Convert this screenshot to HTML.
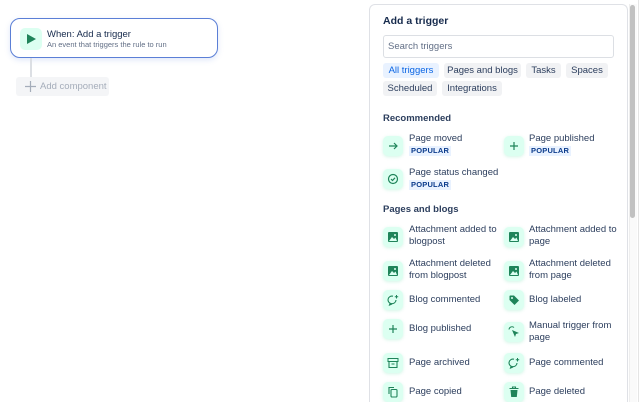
<!DOCTYPE html>
<html><head><meta charset="utf-8"><style>
*{box-sizing:border-box;margin:0;padding:0}
html,body{width:640px;height:402px;overflow:hidden}
body{background:#fff;font-family:"Liberation Sans",sans-serif;color:#172b4d;position:relative}
.a{position:absolute}
.card{left:10px;top:18px;width:208px;height:40px;border:1.5px solid #5b7fd6;border-radius:10px;box-shadow:0 2px 6px rgba(80,120,220,.18);background:#fff}
.panel{left:369px;top:4px;width:259px;height:398px;border:1px solid #dfe1e6;border-bottom:none;border-radius:6px 6px 0 0;background:#fff}
.chip{position:absolute;height:15px;background:#f1f2f4;border-radius:3px;font-size:9.5px;line-height:15px;text-align:center;color:#2c3e5d}
.ic{position:absolute;width:20px;height:20px;border-radius:5px;background:#dcfff1;box-shadow:0 1px 3px rgba(80,220,160,.25)}
.ic svg{position:absolute;left:4px;top:4px;width:12px;height:12px}
.t{position:absolute;font-size:9.5px;line-height:12px;color:#2c3e5d}
.badge{position:absolute;font-size:7.5px;font-weight:bold;color:#0c3c8c;background:#e9f2ff;padding:0 2px;line-height:10px;letter-spacing:.2px}
h4{position:absolute;font-size:9.5px;font-weight:bold;color:#2c3e5d}
</style></head><body>
<div class="a card"></div>
<div class="a" style="left:20px;top:28px;width:22px;height:22px;border-radius:5px;background:#dcfff1"></div>
<svg class="a" style="left:25px;top:33px" width="12" height="12"><path d="M2 1 L11 6 L2 11Z" fill="#1f845a"/></svg>
<div class="a" style="left:47px;top:29px;font-size:9.5px;color:#172b4d">When: Add a trigger</div>
<div class="a" style="left:47px;top:40px;font-size:7.5px;color:#626f86">An event that triggers the rule to run</div>
<div class="a" style="left:30px;top:58px;width:1.5px;height:19px;background:#dcdfe4"></div>
<div class="a" style="left:16px;top:77px;width:93px;height:19px;background:#f4f5f7;border-radius:3px"></div>
<svg class="a" style="left:25px;top:81px" width="11" height="11"><path d="M5.5 0V11M0 5.5H11" stroke="#a5adba" stroke-width="1.2"/></svg>
<div class="a" style="left:40px;top:81px;font-size:9.5px;color:#a5adba">Add component</div>

<div class="a panel"></div>
<div class="a" style="left:629px;top:4px;width:8px;height:398px;background:#fafafa;border-left:1px solid #eee"></div>
<div class="a" style="left:630px;top:5px;width:5px;height:213px;background:#c1c1c1;border-radius:3px"></div>
<div class="a" style="left:638px;top:0;width:1px;height:402px;background:#e5e5e5"></div>

<h4 style="left:383px;top:15px;font-size:10.5px;color:#172b4d">Add a trigger</h4>
<div class="a" style="left:383px;top:35px;width:231px;height:23px;border:1px solid #dcdfe4;border-radius:3px"></div>
<div class="a" style="left:388px;top:41px;font-size:9.5px;color:#626f86">Search triggers</div>
<div class="chip" style="left:383px;top:63px;width:56px;background:#e9f2ff;color:#0c66e4">All triggers</div>
<div class="chip" style="left:444px;top:63px;width:77px">Pages and blogs</div>
<div class="chip" style="left:526px;top:63px;width:35px">Tasks</div>
<div class="chip" style="left:566px;top:63px;width:42px">Spaces</div>
<div class="chip" style="left:383px;top:81px;width:54px">Scheduled</div>
<div class="chip" style="left:442px;top:81px;width:60px">Integrations</div>

<h4 style="left:383px;top:113px">Recommended</h4>
<div class="ic" style="left:383px;top:136px"><svg viewBox="0 0 12 12"><path d="M2 6H10M7 3L10 6L7 9" stroke="#1f845a" stroke-width="1.2" fill="none"/></svg></div>
<div class="t" style="left:409px;top:133px">Page moved</div><div class="badge" style="left:409px;top:146px">POPULAR</div>
<div class="ic" style="left:504px;top:136px"><svg viewBox="0 0 12 12"><path d="M6 2V10M2 6H10" stroke="#1f845a" stroke-width="1.2"/></svg></div>
<div class="t" style="left:529px;top:133px">Page published</div><div class="badge" style="left:529px;top:146px">POPULAR</div>
<div class="ic" style="left:383px;top:169px"><svg viewBox="0 0 12 12"><circle cx="6" cy="6" r="4.5" stroke="#1f845a" stroke-width="1.2" fill="none"/><path d="M4 6L5.5 7.5L8 4.8" stroke="#1f845a" stroke-width="1.2" fill="none"/></svg></div>
<div class="t" style="left:409px;top:167px">Page status changed</div><div class="badge" style="left:409px;top:180px">POPULAR</div>

<h4 style="left:383px;top:204px">Pages and blogs</h4>
<div class="ic" style="left:383px;top:227px"><svg viewBox="0 0 12 12"><rect x="1" y="1" width="10" height="10" rx="1" fill="#1f845a"/><path d="M2 10L5 6L7 8L8.5 6.5L10 10Z" fill="#dcfff1"/><circle cx="8" cy="4" r="1" fill="#dcfff1"/></svg></div>
<div class="t" style="left:409px;top:224px">Attachment added to<br>blogpost</div>
<div class="ic" style="left:504px;top:227px"><svg viewBox="0 0 12 12"><rect x="1" y="1" width="10" height="10" rx="1" fill="#1f845a"/><path d="M2 10L5 6L7 8L8.5 6.5L10 10Z" fill="#dcfff1"/><circle cx="8" cy="4" r="1" fill="#dcfff1"/></svg></div>
<div class="t" style="left:529px;top:224px">Attachment added to<br>page</div>
<div class="ic" style="left:383px;top:261px"><svg viewBox="0 0 12 12"><rect x="1" y="1" width="10" height="10" rx="1" fill="#1f845a"/><path d="M2 10L5 6L7 8L8.5 6.5L10 10Z" fill="#dcfff1"/><circle cx="8" cy="4" r="1" fill="#dcfff1"/></svg></div>
<div class="t" style="left:409px;top:258px">Attachment deleted<br>from blogpost</div>
<div class="ic" style="left:504px;top:261px"><svg viewBox="0 0 12 12"><rect x="1" y="1" width="10" height="10" rx="1" fill="#1f845a"/><path d="M2 10L5 6L7 8L8.5 6.5L10 10Z" fill="#dcfff1"/><circle cx="8" cy="4" r="1" fill="#dcfff1"/></svg></div>
<div class="t" style="left:529px;top:258px">Attachment deleted<br>from page</div>
<div class="ic" style="left:383px;top:290px"><svg viewBox="0 0 12 12"><path d="M9 6A4 3.8 0 1 1 6 2.2M3 9.5L2.5 11L5 10" stroke="#1f845a" stroke-width="1.1" fill="none"/><path d="M9.5 1V4.5M7.8 2.7H11.2" stroke="#1f845a" stroke-width="1"/></svg></div>
<div class="t" style="left:409px;top:294px">Blog commented</div>
<div class="ic" style="left:504px;top:290px"><svg viewBox="0 0 12 12"><path d="M1.5 2V6L6.5 11L11 6.5L6 1.5H2Z" fill="#1f845a"/><circle cx="4" cy="4" r="1" fill="#dcfff1"/></svg></div>
<div class="t" style="left:529px;top:294px">Blog labeled</div>
<div class="ic" style="left:383px;top:319px"><svg viewBox="0 0 12 12"><path d="M6 2V10M2 6H10" stroke="#1f845a" stroke-width="1.2"/></svg></div>
<div class="t" style="left:409px;top:323px">Blog published</div>
<div class="ic" style="left:504px;top:322px"><svg viewBox="0 0 12 12"><path d="M4 4L11 7L8 8L7 11Z" fill="#1f845a"/><path d="M1 3.5A3 3 0 0 1 6 1.5" stroke="#1f845a" stroke-width="1" fill="none"/></svg></div>
<div class="t" style="left:529px;top:320px">Manual trigger from<br>page</div>
<div class="ic" style="left:383px;top:353px"><svg viewBox="0 0 12 12"><rect x="1" y="1.5" width="10" height="3" stroke="#1f845a" fill="none"/><path d="M2 4.5V10.5H10V4.5M4.5 7H7.5" stroke="#1f845a" stroke-width="1.1" fill="none"/></svg></div>
<div class="t" style="left:409px;top:357px">Page archived</div>
<div class="ic" style="left:504px;top:353px"><svg viewBox="0 0 12 12"><path d="M9 6A4 3.8 0 1 1 6 2.2M3 9.5L2.5 11L5 10" stroke="#1f845a" stroke-width="1.1" fill="none"/><path d="M9.5 1V4.5M7.8 2.7H11.2" stroke="#1f845a" stroke-width="1"/></svg></div>
<div class="t" style="left:529px;top:357px">Page commented</div>
<div class="ic" style="left:383px;top:382px"><svg viewBox="0 0 12 12"><path d="M2 8V1.5H7" stroke="#1f845a" stroke-width="1.1" fill="none"/><rect x="4" y="3.5" width="6" height="7.5" rx="1" stroke="#1f845a" stroke-width="1.1" fill="none"/></svg></div>
<div class="t" style="left:409px;top:386px">Page copied</div>
<div class="ic" style="left:504px;top:382px"><svg viewBox="0 0 12 12"><path d="M1.5 2.5H10.5M4.5 2.5V1H7.5V2.5" stroke="#1f845a" stroke-width="1.1" fill="none"/><path d="M2.5 4H9.5L8.8 11H3.2Z" fill="#1f845a"/></svg></div>
<div class="t" style="left:529px;top:386px">Page deleted</div>
</body></html>
